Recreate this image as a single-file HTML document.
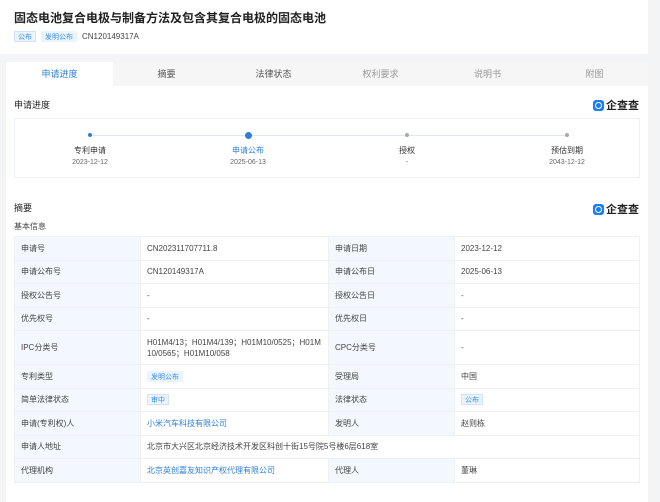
<!DOCTYPE html><html><head><meta charset="utf-8"><style>
*{margin:0;padding:0;box-sizing:border-box}
body{width:660px;height:494px;overflow:hidden;background:#f3f4f6;font-family:"Liberation Sans","Noto Sans CJK SC",sans-serif;color:#333;position:relative}
.a{position:absolute}
.hdr{left:0;top:0;width:648px;height:54px;background:#fff}
.card{left:6px;top:62px;width:642px;height:440px;background:#fff}
.tabs{left:6px;top:62px;width:642px;height:24px;background:#f6f6f6;font-size:9px;color:#555}
.tabs div{position:absolute;top:0;height:24px;line-height:24px;text-align:center}
.tag{display:inline-block;font-size:7px;padding:0 3px;height:11px;line-height:11px;color:#3a8ee6;background:#eaf4fd;border:1px solid #cfe4f8}
.logo{font-size:11px;font-weight:bold;color:#222;display:flex;align-items:center;gap:2px}
.logo i{display:inline-block;width:11px;height:11px;border-radius:3px;background:#1a7ef2;position:relative}
.logo i:after{content:"";position:absolute;left:2px;top:2px;width:5px;height:5px;border:1px solid #fff;border-radius:50%}
table{position:absolute;left:14px;top:236px;width:626px;border-collapse:collapse;font-size:8px;color:#444}
td{border:1px solid #eef0f3;height:23.5px;padding:0 6px;vertical-align:middle}
td.l{background:#f2f8fd;width:126px}
td.v{width:188px}
.b{color:#2f7fd8}
.step{position:absolute;text-align:center;width:120px;font-size:8px}
.step .d{width:5px;height:5px;border-radius:50%;background:#aaa;margin:0 auto 8px}
</style></head><body>
<div class="a hdr"></div>
<div class="a" style="left:14px;top:9px;font-size:12px;font-weight:bold;color:#222">固态电池复合电极与制备方法及包含其复合电极的固态电池</div>
<div class="a" style="left:14px;top:31px;font-size:8px;color:#444;display:flex;gap:5px;align-items:center"><span class="tag">公布</span><span class="tag" style="border-color:#eaf4fd">发明公布</span><span>CN120149317A</span></div>
<div class="a card"></div>
<div class="a tabs">
<div style="left:0;width:107px;background:#fff;color:#2f7fd8">申请进度</div>
<div style="left:107px;width:107px">摘要</div>
<div style="left:214px;width:107px">法律状态</div>
<div style="left:321px;width:107px;color:#999">权利要求</div>
<div style="left:428px;width:107px;color:#999">说明书</div>
<div style="left:535px;width:107px;color:#999">附图</div>
</div>
<div class="a" style="left:14px;top:98px;font-size:9px;color:#222">申请进度</div>
<div class="a logo" style="left:593px;top:97px"><i></i>企查查</div>
<div class="a" style="left:14px;top:118px;width:626px;height:60px;border:1px solid #eef0f3"></div>
<div class="a" style="left:90px;top:135px;width:477px;height:1px;background:#dfe8f2"></div>
<div class="step" style="left:30px;top:133px"><div class="d" style="background:#2f7fd8;width:4px;height:4px"></div>专利申请<div style="font-size:7px;color:#666;margin-top:3px">2023-12-12</div></div>
<div class="step" style="left:188px;top:132px"><div class="d" style="background:#2f7fd8;width:7px;height:7px;margin-bottom:6px"></div><span style="color:#2f7fd8">申请公布</span><div style="font-size:7px;color:#666;margin-top:3px">2025-06-13</div></div>
<div class="step" style="left:347px;top:133px"><div class="d" style="width:4px;height:4px"></div>授权<div style="font-size:7px;color:#666;margin-top:3px">-</div></div>
<div class="step" style="left:507px;top:133px"><div class="d" style="width:4px;height:4px"></div>预估到期<div style="font-size:7px;color:#666;margin-top:3px">2043-12-12</div></div>
<div class="a" style="left:14px;top:201px;font-size:9px;color:#222">摘要</div>
<div class="a logo" style="left:593px;top:201px"><i></i>企查查</div>
<div class="a" style="left:14px;top:221px;font-size:8px;color:#444">基本信息</div>
<table>
<tr><td class="l">申请号</td><td class="v">CN202311707711.8</td><td class="l">申请日期</td><td>2023-12-12</td></tr>
<tr><td class="l">申请公布号</td><td class="v">CN120149317A</td><td class="l">申请公布日</td><td>2025-06-13</td></tr>
<tr><td class="l">授权公告号</td><td class="v">-</td><td class="l">授权公告日</td><td>-</td></tr>
<tr><td class="l">优先权号</td><td class="v">-</td><td class="l">优先权日</td><td>-</td></tr>
<tr><td class="l" style="height:34px">IPC分类号</td><td class="v" style="line-height:11px;word-break:break-all">H01M4/13；H01M4/139；H01M10/0525；H01M10/0565；H01M10/058</td><td class="l">CPC分类号</td><td>-</td></tr>
<tr><td class="l">专利类型</td><td class="v"><span class="tag" style="border-color:#eaf4fd">发明公布</span></td><td class="l">受理局</td><td>中国</td></tr>
<tr><td class="l">简单法律状态</td><td class="v"><span class="tag">审中</span></td><td class="l">法律状态</td><td><span class="tag">公布</span></td></tr>
<tr><td class="l">申请(专利权)人</td><td class="v b">小米汽车科技有限公司</td><td class="l">发明人</td><td>赵则栋</td></tr>
<tr><td class="l">申请人地址</td><td colspan="3">北京市大兴区北京经济技术开发区科创十街15号院5号楼6层618室</td></tr>
<tr><td class="l">代理机构</td><td class="v b">北京英创嘉友知识产权代理有限公司</td><td class="l">代理人</td><td>董琳</td></tr>
</table>
</body></html>
